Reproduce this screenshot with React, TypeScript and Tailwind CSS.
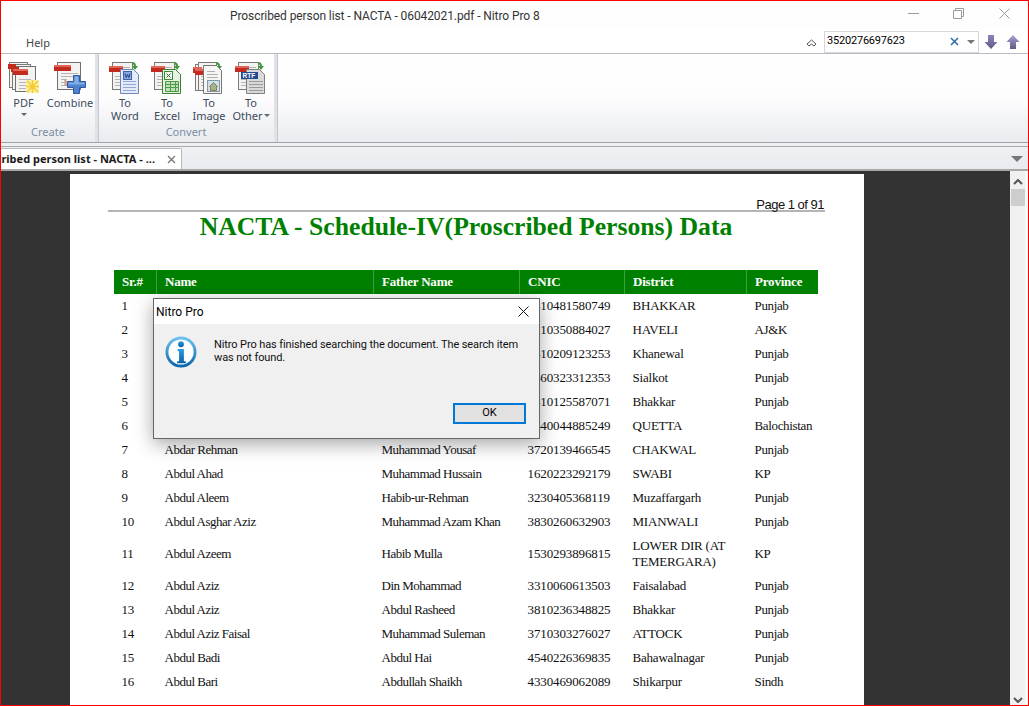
import React from "react";

const sans = "font-['Noto_Sans',sans-serif]";

const rows: [string, string, string, string, string, string][] = [
  ["1", "", "", "3810481580749", "BHAKKAR", "Punjab"],
  ["2", "", "", "8210350884027", "HAVELI", "AJ&K"],
  ["3", "", "", "3610209123253", "Khanewal", "Punjab"],
  ["4", "", "", "3460323312353", "Sialkot", "Punjab"],
  ["5", "", "", "3810125587071", "Bhakkar", "Punjab"],
  ["6", "", "", "5440044885249", "QUETTA", "Balochistan"],
  ["7", "Abdar Rehman", "Muhammad Yousaf", "3720139466545", "CHAKWAL", "Punjab"],
  ["8", "Abdul Ahad", "Muhammad Hussain", "1620223292179", "SWABI", "KP"],
  ["9", "Abdul Aleem", "Habib-ur-Rehman", "3230405368119", "Muzaffargarh", "Punjab"],
  ["10", "Abdul Asghar Aziz", "Muhammad Azam Khan", "3830260632903", "MIANWALI", "Punjab"],
  ["11", "Abdul Azeem", "Habib Mulla", "1530293896815", "LOWER DIR (AT TEMERGARA)", "KP"],
  ["12", "Abdul Aziz", "Din Mohammad", "3310060613503", "Faisalabad", "Punjab"],
  ["13", "Abdul Aziz", "Abdul Rasheed", "3810236348825", "Bhakkar", "Punjab"],
  ["14", "Abdul Aziz Faisal", "Muhammad Suleman", "3710303276027", "ATTOCK", "Punjab"],
  ["15", "Abdul Badi", "Abdul Hai", "4540226369835", "Bahawalnagar", "Punjab"],
  ["16", "Abdul Bari", "Abdullah Shaikh", "4330469062089", "Shikarpur", "Sindh"],
];

const colTracking = [
  "tracking-[-0.2px]",
  "tracking-[-0.5px]",
  "tracking-[-0.5px]",
  "tracking-[-0.12px]",
  "tracking-[-0.2px]",
  "tracking-[-0.35px]",
];

function BackDoc({ x = 4, y = 1, w = 20, h = 27 }: { x?: number; y?: number; w?: number; h?: number }) {
  return (
    <g>
      <rect x={x + 0.5} y={y + 0.5} width={w} height={h} fill="#f4f3ef" stroke="#7a7a7a" />
      <path d={`M${x + 9} ${y + 5.5}h${w - 11}M${x + 9} ${y + 8.5}h${w - 11}M${x + 3} ${y + 14.5}h${w - 6}M${x + 3} ${y + 17.5}h${w - 6}M${x + 3} ${y + 20.5}h${w - 6}M${x + 3} ${y + 23.5}h${w - 6}`} stroke="#b5b5b5" />
    </g>
  );
}

function RedBar({ x = 1, y = 5, w = 14 }: { x?: number; y?: number; w?: number }) {
  return (
    <g>
      <rect x={x} y={y} width={w} height={6} fill="#c32a1e" />
      <rect x={x} y={y} width={w} height={2} fill="#e0665a" />
    </g>
  );
}

function Arrow() {
  return <path d="M24 1c3 0 4 2 4 4h2l-3 4-3-4h2c0-1-1-2-2-2z" fill="#3f9a3c" />;
}

function DocFront({ fill, stroke }: { fill: string; stroke: string }) {
  return <path d="M12.5 8.500h13l5 5v19h-18z" fill={fill} stroke={stroke} />;
}

function Svg({ children }: { children: React.ReactNode }) {
  return (
    <svg width="34" height="34" viewBox="0 0 34 34">
      {children}
    </svg>
  );
}

function WordIcon() {
  return (
    <Svg>
      <BackDoc />
      <Arrow />
      <RedBar />
      <DocFront fill="#e4ebf8" stroke="#6f86b4" />
      <path d="M15 20.500h13M15 23.500h13M15 26.500h13M15 29.500h13" stroke="#8fa8d6" />
      <rect x="15.500" y="10.500" width="8" height="8" fill="#8aa8dc" stroke="#3f62a8" />
      <path d="M17 12.500l1.200 4 1.300-3 1.300 3 1.200-4" stroke="#1f3f8f" fill="none" />
    </Svg>
  );
}

function ExcelIcon() {
  return (
    <Svg>
      <BackDoc />
      <Arrow />
      <RedBar />
      <DocFront fill="#e6f2e2" stroke="#3f7f38" />
      <rect x="14.500" y="10.500" width="8" height="8" fill="#f4f9f2" stroke="#3f8a3a" />
      <path d="M16.500 12.500l4 4M20.500 12.500l-4 4" stroke="#1f6a26" />
      <path d="M15.500 20.500h13v10h-13zM15.500 23.500h13M15.500 26.500h13M20.500 20.500v10M25.500 20.500v10" fill="#bfe0b6" stroke="#4f9a48" />
    </Svg>
  );
}

function ImageIcon() {
  return (
    <Svg>
      <BackDoc x={3} y={3} w={16} h={26} />
      <BackDoc x={6} y={1} w={18} h={28} />
      <Arrow />
      <RedBar x={1} y={6} w={9} />
      <RedBar x={3} y={8} w={9} />
      <path d="M11.500 4.500h13l5 5v23h-18z" fill="#f6f6f4" stroke="#777" />
      <path d="M15 10.500h8M15 13.500h11M15 16.500h11" stroke="#b0b0b0" />
      <rect x="15.500" y="19.500" width="12" height="11" fill="#cfe0ea" stroke="#7f9aa8" />
      <path d="M21.500 21.500l4 4h-1v4h-6v-4h-1z" fill="#9bb88a" stroke="#a0785a" />
    </Svg>
  );
}

function OtherIcon() {
  return (
    <Svg>
      <BackDoc />
      <Arrow />
      <RedBar />
      <DocFront fill="#d9d9d9" stroke="#808080" />
      <path d="M15 20.500h14M15 23.500h14M15 26.500h14M15 29.500h14" stroke="#9c9c9c" />
      <rect x="7" y="11" width="17" height="7" fill="#23498f" />
      <text x="8.500" y="17" fontSize="6.500" fontWeight="700" fill="#fff" fontFamily="Liberation Sans, sans-serif">
        RTF
      </text>
    </Svg>
  );
}

function PdfIcon() {
  return (
    <Svg>
      <BackDoc x={2} y={1} w={18} h={25} />
      <BackDoc x={5} y={3} w={18} h={25} />
      <rect x="8.500" y="5.500" width="20" height="25" fill="#f4f3ef" stroke="#6f6f6f" />
      <path d="M12 18.500h12M12 21.500h10M12 24.500h10M12 27.500h9" stroke="#b5b5b5" />
      <rect x="1" y="3" width="8" height="5" fill="#c32a1e" />
      <rect x="4" y="6" width="8" height="5" fill="#c32a1e" />
      <RedBar x={6} y={8} w={15} />
      <rect x="19" y="19" width="13" height="13" fill="#fdf0a6" />
      <path d="M25.500 19v13M19 25.500h13M20 20l11 11M31 20l-11 11" stroke="#f4cc32" strokeWidth="1.600" />
    </Svg>
  );
}

function CombineIcon() {
  return (
    <Svg>
      <rect x="4.500" y="1.500" width="23" height="27" fill="#f4f3ef" stroke="#6f6f6f" />
      <path d="M8 12.500h17M8 15.500h17M8 18.500h6M8 21.500h6M8 24.500h6" stroke="#b5b5b5" />
      <RedBar x={1} y={4} w={17} />
      <path d="M12 19l3 3 3-2v4h-6z" fill="#e8b8b0" stroke="#c98a80" />
      <path d="M20.500 14.500h6v6h6v6h-6v6h-6v-6h-6v-6h6z" fill="#4f83d2" stroke="#2e5a9e" />
      <path d="M21.500 15.500h4v6h-4zM15.500 21.500h16v2h-16z" fill="#82aee6" />
    </Svg>
  );
}

function Btn({ icon, l1, l2, w, caret }: { icon: React.ReactNode; l1: string; l2?: React.ReactNode; w: string; caret?: boolean }) {
  return (
    <div className={`flex flex-col items-center ${w}`}>
      <div className="h-[34px]">{icon}</div>
      <div className="mt-[1px] text-[11px] leading-[13px] whitespace-nowrap text-center">{l1}</div>
      {l2 && <div className="text-[11px] leading-[13px] whitespace-nowrap text-center">{l2}</div>}
      {caret && <Caret />}
    </div>
  );
}

function Caret() {
  return <div className="mt-[4px] w-0 h-0 border-l-[3px] border-r-[3px] border-t-[3px] border-l-transparent border-r-transparent border-t-[#666]" />;
}

function Group({ label, children, className }: { label: string; children: React.ReactNode; className: string }) {
  return (
    <div className={`flex flex-col shrink-0 border-r-[3px] border-r-[#dfe2e6] shadow-[1px_0_0_#c4c8ce] ${className}`}>
      <div className="flex pt-[6px] h-[70px]">{children}</div>
      <div className="text-[11px] leading-[14px] text-[#7c8ea3] text-center pt-[1px]">{label}</div>
    </div>
  );
}

function InfoIcon() {
  return (
    <svg width="32" height="32" viewBox="0 0 33 33">
      <defs>
        <linearGradient id="ring" x1="0" y1="0" x2="0" y2="1">
          <stop offset="0" stopColor="#6fc1ee" />
          <stop offset="1" stopColor="#0a68ad" />
        </linearGradient>
        <linearGradient id="dot" x1="0" y1="0" x2="0" y2="1">
          <stop offset="0" stopColor="#2c9fe0" />
          <stop offset="1" stopColor="#0a5fa8" />
        </linearGradient>
      </defs>
      <circle cx="16.500" cy="16.500" r="14.500" fill="#fff" stroke="url(#ring)" strokeWidth="3" />
      <circle cx="16.500" cy="8.500" r="3" fill="url(#dot)" />
      <path d="M13 13.500h6.500v12.500h2v2.200h-9v-2.200h2v-10.300h-1.500z" fill="url(#dot)" />
    </svg>
  );
}

function NavArrow({ up }: { up?: boolean }) {
  return (
    <svg width="16" height="16" viewBox="0 0 16 16">
      <defs>
        <linearGradient id={up ? "au" : "ad"} x1="0" y1="0" x2="0" y2="1">
          <stop offset="0" stopColor={up ? "#a9a0d0" : "#8c84bc"} />
          <stop offset="1" stopColor="#5f5a86" />
        </linearGradient>
      </defs>
      <path d={up ? "M8 1l6.500 7H11v7H5V8H1.500z" : "M5 1h6v7h3.500L8 15 1.500 8H5z"} fill={`url(#${up ? "au" : "ad"})`} />
    </svg>
  );
}

export default function App() {
  return (
    <div className={`relative w-[1029px] h-[706px] overflow-hidden border border-[#ff0000] bg-white flex flex-col ${sans}`}>
      {/* Title bar */}
      <div className="h-[29px] shrink-0 flex items-start bg-gradient-to-b from-[#ffffff] to-[#fdfdfd]">
        <div className="ml-[229px] mt-[6px] font-['Roboto',sans-serif] text-[12px] leading-[18px] tracking-[-0.09px] text-[#333] whitespace-nowrap">Proscribed person list - NACTA - 06042021.pdf - Nitro Pro 8</div>
        <div className="ml-auto flex items-center h-[29px] pb-[4px] text-[#999]">
          <svg width="11" height="11" viewBox="0 0 11 11" className="mr-[34px]"><path d="M0 5.500h11" stroke="#9a9a9a" /></svg>
          <svg width="11" height="11" viewBox="0 0 11 11" className="mr-[35px]"><path d="M.5 2.500h8v8h-8zM2.500 2.500v-2h8v8h-2" fill="none" stroke="#9a9a9a" /></svg>
          <svg width="11" height="11" viewBox="0 0 11 11" className="mr-[18px]"><path d="M.5.500l10 10M10.500.500l-10 10" stroke="#9a9a9a" /></svg>
        </div>
      </div>
      {/* Menu row */}
      <div className="h-[24px] shrink-0 flex items-center border-b border-b-[#b8bcc2]">
        <div className="ml-[25px] mt-[4px] text-[11px] text-[#444]">Help</div>
        <svg width="11" height="8" viewBox="0 0 11 8" className="ml-auto mr-[7px] mt-[2px]"><path d="M1 5l4.500-4L10 5 8 7 5.500 5 3 7z" fill="none" stroke="#555" /></svg>
        <div className="w-[155px] h-[22px] bg-white border border-[#d4d8dc] flex items-center pl-[2px] pr-[3px]">
          <span className="font-['Roboto',sans-serif] text-[11px] tracking-[-0.2px] text-black">3520276697623</span>
          <svg width="9" height="9" viewBox="0 0 9 9" className="ml-auto mr-[8px]"><path d="M1 1l7 7M8 1l-7 7" stroke="#2f6ea8" strokeWidth="1.600" /></svg>
          <div className="w-0 h-0 border-l-[4px] border-r-[4px] border-t-[4px] border-l-transparent border-r-transparent border-t-[#777]" />
        </div>
        <div className="ml-[4px] mr-[7px] flex gap-[6px]">
          <NavArrow />
          <NavArrow up />
        </div>
      </div>
      {/* Ribbon */}
      <div className="h-[89px] shrink-0 flex text-[#3c4a5c] bg-gradient-to-b from-[#ffffff] via-[#fdfdfe] to-[#e9ebee] border-b border-b-[#9ea3aa]">
        <Group label="Create" className="w-[97px]">
          <div className="flex pl-[1px] pt-[1px]">
            <Btn w="w-[43px]" icon={<PdfIcon />} l1="PDF" caret />
            <Btn w="w-[50px]" icon={<CombineIcon />} l1="Combine" />
          </div>
        </Group>
        <Group label="Convert" className="w-[179px]">
          <div className="flex pl-[6px] pt-[1px]">
            <Btn w="w-[42px]" icon={<WordIcon />} l1="To" l2="Word" />
            <Btn w="w-[42px]" icon={<ExcelIcon />} l1="To" l2="Excel" />
            <Btn w="w-[42px]" icon={<ImageIcon />} l1="To" l2="Image" />
            <Btn
              w="w-[42px]"
              icon={<OtherIcon />}
              l1="To"
              l2={
                <span className="inline-flex items-center gap-[1px]">
                  Other
                  <span className="w-0 h-0 border-l-[3px] border-r-[3px] border-t-[3px] border-l-transparent border-r-transparent border-t-[#666]" />
                </span>
              }
            />
          </div>
        </Group>
      </div>
      {/* Spacer strip */}
      <div className="h-[3px] shrink-0 bg-[#eef0f2] border-b border-b-[#a4a9b0] box-content" />
      {/* Tab bar */}
      <div className="h-[22px] shrink-0 flex items-end bg-gradient-to-b from-[#eff1f4] to-[#e8ebef] border-b-[2px] border-b-[#a8a8a8] box-content">
        <div className="w-[181px] h-[21px] bg-white border-t border-r border-[#b5b8bd] rounded-tr-[2px] flex items-center overflow-hidden">
          <div className="w-[154px] overflow-hidden flex justify-end">
            <span className="text-[11px] font-bold text-[#1a1a1a] whitespace-nowrap">Proscribed person list - NACTA - ...</span>
          </div>
          <svg width="9" height="9" viewBox="0 0 9 9" className="ml-[12px]"><path d="M1 1l7 7M8 1l-7 7" stroke="#777" strokeWidth="1.300" /></svg>
        </div>
        <div className="ml-auto mr-[5px] mb-[7px] w-0 h-0 border-l-[6px] border-r-[6px] border-t-[6px] border-l-transparent border-r-transparent border-t-[#777]" />
      </div>
      {/* Document area */}
      <div className="flex-1 min-h-0 flex bg-[#333333] overflow-hidden">
        <div className="flex-1 min-w-0 overflow-hidden pt-[3px] pl-[69px]">
          <div className="w-[794px] h-[600px] bg-white font-['Liberation_Serif',serif] text-[#111]">
            <div className="ml-[38px] w-[717px] h-[38px] border-b-2 border-b-[#b4b4b4] flex items-end justify-end pr-[1px]">
              <span className="font-['Liberation_Sans',sans-serif] text-[13px] leading-[16px] tracking-[-0.5px] text-[#111] -mb-[3px]">Page 1 of 91</span>
            </div>
            <div className="h-[27px] mt-[1px] pr-[2px] text-center font-bold text-[25.7px] leading-[27px] text-[#008000] whitespace-nowrap">NACTA - Schedule-IV(Proscribed Persons) Data</div>
            <table className="ml-[43px] mt-[30px] w-[704px] table-fixed border-collapse text-[13px] leading-[16px] tracking-[-0.2px]">
              <colgroup>
                <col className="w-[43px]" />
                <col className="w-[217px]" />
                <col className="w-[146px]" />
                <col className="w-[105px]" />
                <col className="w-[122px]" />
                <col className="w-[71px]" />
              </colgroup>
              <thead>
                <tr className="h-[24px] bg-[#008000] text-white font-bold">
                  {["Sr.#", "Name", "Father Name", "CNIC", "District", "Province"].map((h) => (
                    <th key={h} className="border-l border-l-[#3f9f3f] first:border-l-transparent pl-[8px] text-left font-bold">{h}</th>
                  ))}
                </tr>
              </thead>
              <tbody>
                {rows.map((r) => (
                  <tr key={r[0]} className={r[0] === "11" ? "h-[40px]" : "h-[24px]"}>
                    {r.map((c, i) => (
                      <td key={i} className={`pl-[8px] pr-[4px] align-middle ${colTracking[i]}`}>{c}</td>
                    ))}
                  </tr>
                ))}
                <tr className="h-[40px]">
                  <td />
                  <td />
                  <td className="pl-[8px] align-middle tracking-[-0.5px]">Taj Muhammad kharani</td>
                  <td /><td /><td />
                </tr>
              </tbody>
            </table>
          </div>
        </div>
        {/* Scrollbar */}
        <div className="w-[18px] shrink-0 bg-[#f0f0f0] border-r-[3px] border-r-[#f9f9f9] box-border flex flex-col items-center">
          <svg width="10" height="6" viewBox="0 0 10 6" className="mt-[8px]"><path d="M1 5l4-4 4 4" fill="none" stroke="#555" strokeWidth="2" /></svg>
          <div className="mt-[4px] w-[14px] h-[17px] bg-[#cdcdcd]" />
          <svg width="10" height="6" viewBox="0 0 10 6" className="mt-auto mb-[2px]"><path d="M1 1l4 4 4-4" fill="none" stroke="#555" strokeWidth="2" /></svg>
        </div>
      </div>

      {/* Modal dialog */}
      <div className="absolute left-[152px] top-[297px] w-[387px] h-[141px] border border-[#666] bg-[#f0f0f0] shadow-[0_5px_18px_rgba(0,0,0,0.35)] flex flex-col font-['Roboto',sans-serif]">
        <div className="h-[25px] shrink-0 bg-white flex items-center pl-[2px] pr-[10px]">
          <span className="text-[12px] text-black">Nitro Pro</span>
          <svg width="11" height="11" viewBox="0 0 11 11" className="ml-auto"><path d="M.5.500l10 10M10.500.500l-10 10" stroke="#111" /></svg>
        </div>
        <div className="flex pl-[11px] pt-[12px] h-[79px]">
          <InfoIcon />
          <div className="ml-[17px] mt-[2px] w-[312px] text-[11px] leading-[13px] tracking-[-0.11px] text-[#111]">
            Nitro Pro has finished searching the document. The search item was not found.
          </div>
        </div>
        <div className="flex justify-end pr-[13px]">
          <div className="w-[73px] h-[21px] bg-[#e1e1e1] border-2 border-[#0078d7] flex items-center justify-center text-[11px] text-black">OK</div>
        </div>
      </div>
    </div>
  );
}
